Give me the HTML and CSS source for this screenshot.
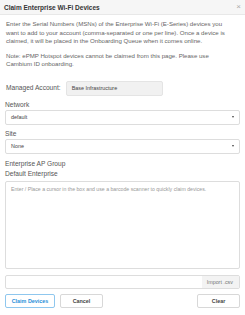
FILE: index.html
```html
<!DOCTYPE html>
<html>
<head>
<meta charset="utf-8">
<link rel="stylesheet" href="styles.css">
</head>
<body>
<div class="modal">
  <div class="header">
    <span class="title">Claim Enterprise Wi-Fi Devices</span>
    <span class="close">×</span>
  </div>
  <div class="body">
    <p class="text">Enter the Serial Numbers (MSNs) of the Enterprise Wi-Fi (E-Series) devices you want to add to your account (comma-separated or one per line). Once a device is claimed, it will be placed in the Onboarding Queue when it comes online.</p>
    <p class="text">Note: ePMP Hotspot devices cannot be claimed from this page. Please use Cambium ID onboarding.</p>
    <div class="account">
      <span class="label">Managed Account:</span>
      <span class="account-box">Base Infrastructure</span>
    </div>
    <div class="field">
      <div class="label">Network</div>
      <div class="select"><span>default</span><span class="caret"></span></div>
    </div>
    <div class="field">
      <div class="label">Site</div>
      <div class="select"><span>None</span><span class="caret"></span></div>
    </div>
    <div class="group">
      <div class="label">Enterprise AP Group</div>
      <div class="label">Default Enterprise</div>
    </div>
    <div class="textarea">Enter / Place a cursor in the box and use a barcode scanner to quickly claim devices.</div>
    <div class="import">
      <span class="import-input"></span>
      <span class="import-btn">Import .csv</span>
    </div>
    <div class="actions">
      <span class="btn primary">Claim Devices</span>
      <span class="btn">Cancel</span>
      <span class="spacer"></span>
      <span class="btn">Clear</span>
    </div>
  </div>
</div>
</body>
</html>
```
FILE: styles.css
```css
html, body {
  margin: 0;
  padding: 0;
  background: #fff;
  font-family: "Liberation Sans", Arial, sans-serif;
}
.modal {
  width: 245px;
  height: 315px;
  display: flex;
  flex-direction: column;
  box-sizing: border-box;
}
.header {
  height: 14px;
  background: #f6f6f6;
  border-bottom: 1px solid #e8e8e8;
  display: flex;
  align-items: center;
  justify-content: space-between;
  padding: 0 4px;
}
.title {
  font-size: 6.5px;
  font-weight: bold;
  color: #333;
}
.close {
  font-size: 8px;
  color: #aaa;
  line-height: 1;
}
.body {
  padding: 5px 5px 0 5px;
  display: flex;
  flex-direction: column;
}
.text {
  margin: 0 12px 6px 1px;
  font-size: 6.1px;
  line-height: 8.6px;
  color: #666;
}
.label {
  font-size: 6.6px;
  color: #555;
  line-height: 10px;
}
.account {
  display: flex;
  align-items: center;
  gap: 5px;
  margin: 6px 0 4px 1px;
}
.account-box {
  width: 97px;
  height: 15px;
  box-sizing: border-box;
  background: #f1f1f1;
  border: 1px solid #e4e4e4;
  border-radius: 2px;
  font-size: 5.4px;
  color: #444;
  display: flex;
  align-items: center;
  padding-left: 5px;
}
.field {
  margin-bottom: 4px;
}
.select {
  height: 15px;
  box-sizing: border-box;
  border: 1px solid #ddd;
  border-radius: 2px;
  display: flex;
  align-items: center;
  justify-content: space-between;
  padding: 0 5px;
  font-size: 5.4px;
  color: #444;
}
.caret {
  width: 0;
  height: 0;
  border-left: 1.5px solid transparent;
  border-right: 1.5px solid transparent;
  border-top: 2px solid #444;
}
.group {
  margin: 1px 0 2px 0;
}
.textarea {
  height: 88px;
  box-sizing: border-box;
  border: 1px solid #ddd;
  border-radius: 2px;
  padding: 4px 5px;
  font-size: 5.2px;
  color: #999;
}
.import {
  margin-top: 6px;
  height: 14px;
  display: flex;
  box-sizing: border-box;
  border: 1px solid #ddd;
  border-radius: 2px;
}
.import-input {
  flex: 1;
}
.import-btn {
  background: #f3f3f3;
  font-size: 5.4px;
  color: #777;
  display: flex;
  align-items: center;
  padding: 0 6px 0 5px;
}
.actions {
  margin-top: 5px;
  display: flex;
  gap: 5px;
}
.spacer {
  flex: 1;
}
.btn {
  height: 14px;
  width: 43px;
  box-sizing: border-box;
  border: 1px solid #d8d8d8;
  border-radius: 2px;
  display: flex;
  align-items: center;
  justify-content: center;
  font-size: 5.4px;
  font-weight: bold;
  color: #444;
}
.btn.primary {
  width: 50px;
  border-color: #8fc7ee;
  color: #2a8fd8;
}
```
